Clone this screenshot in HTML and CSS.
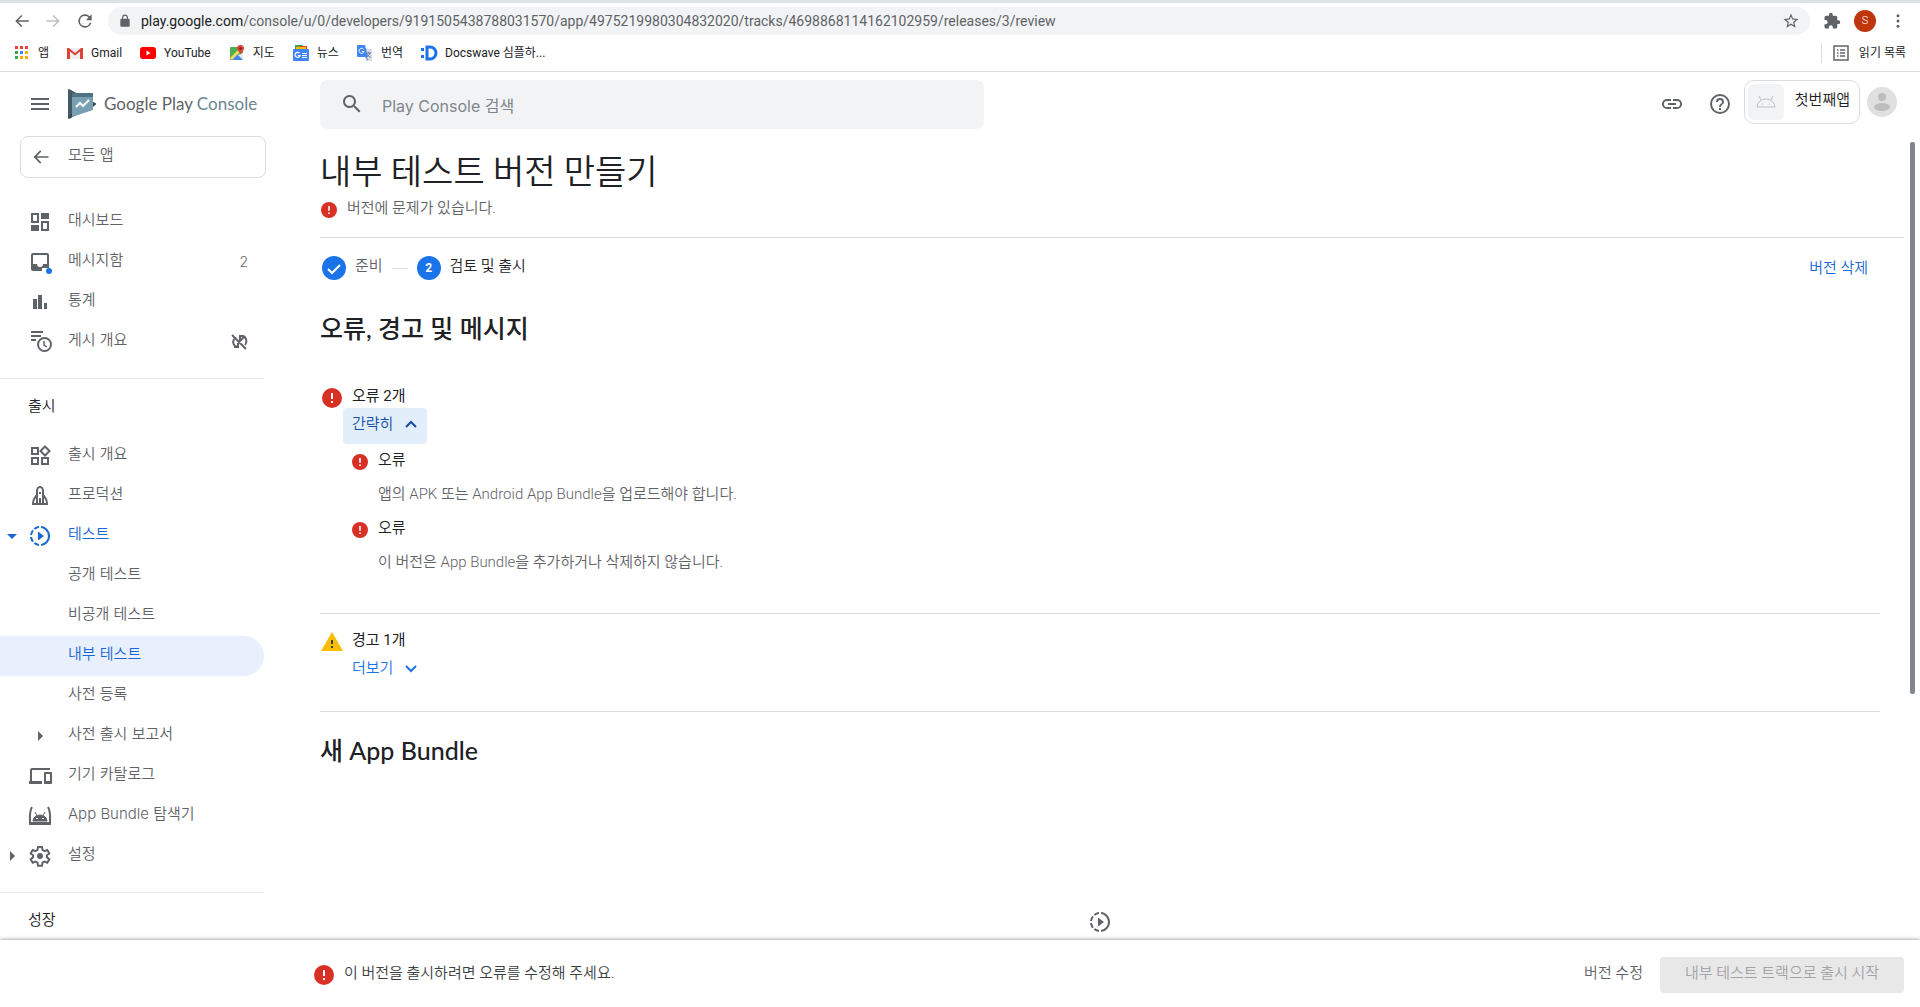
FILE: index.html
```html
<!DOCTYPE html>
<html lang="ko">

<head>
    <meta charset="UTF-8">
    <meta name="viewport" content="width=device-width, initial-scale=1.0">
    <title>내부 테스트 버전 만들기 | Google Play Console</title>
    <link rel="stylesheet" href="styles.css">
</head>

<body>
    <!-- 공용 아이콘 -->
    <svg class="sprite" aria-hidden="true">
        <symbol id="i-error" viewBox="0 0 20 20">
            <circle cx="10" cy="10" r="10" fill="#d93025" />
            <path d="M9 5h2v6H9zM9 13h2v2H9z" fill="#fff" />
        </symbol>
        <symbol id="i-test" viewBox="0 0 24 24">
            <path d="M13.05 9.79L10 7.5v9l3.05-2.29L16 12zM11 4.07V2.05c-2.01.2-3.84 1-5.32 2.21L7.1 5.69A7.94 7.94 0 0 1 11 4.07zM5.69 7.1L4.26 5.68A9.95 9.95 0 0 0 2.05 11h2.02c.18-1.46.76-2.79 1.62-3.9zM4.07 13H2.05c.2 2.01 1 3.84 2.21 5.32l1.43-1.43A7.87 7.87 0 0 1 4.07 13zm1.61 6.74A9.98 9.98 0 0 0 11 21.95v-2.02a7.94 7.94 0 0 1-3.9-1.62zM22 12c0 5.16-3.92 9.42-8.95 9.95v-2.02a8 8 0 0 0 0-15.86V2.05C18.08 2.58 22 6.84 22 12z" />
        </symbol>
        <symbol id="i-back" viewBox="0 0 24 24">
            <path d="M21 11H6.83l5.59-5.59L11 4l-8 8 8 8 1.41-1.41L6.83 13H21z" />
        </symbol>
    </svg>

    <header class="browser">
        <div class="toolbar">
            <button class="tool" aria-label="뒤로"><svg width="18" height="18" viewBox="0 0 24 24"><use href="#i-back" /></svg></button>
            <button class="tool forward" aria-label="앞으로"><svg width="18" height="18" viewBox="0 0 24 24"><path d="M3 11h14.17l-5.59-5.59L13 4l8 8-8 8-1.41-1.41L17.17 13H3z" /></svg></button>
            <button class="tool" aria-label="새로고침"><svg width="20" height="20" viewBox="0 0 24 24"><path d="M17.65 6.35A8 8 0 1 0 19.73 14h-2.08A6 6 0 1 1 12 6c1.66 0 3.14.69 4.22 1.78L13 11h7V4z" /></svg></button>
            <div class="omnibox">
                <svg width="14" height="14" viewBox="0 0 24 24"><path d="M18 8h-1V6A5 5 0 0 0 7 6v2H6a2 2 0 0 0-2 2v10c0 1.100.9 2 2 2h12a2 2 0 0 0 2-2V10a2 2 0 0 0-2-2zM9 6a3 3 0 0 1 6 0v2H9z" /></svg>
                <p class="url"><b>play.google.com</b>/console/u/0/developers/9191505438788031570/app/4975219980304832020/tracks/4698868114162102959/releases/3/review</p>
                <svg width="18" height="18" viewBox="0 0 24 24"><path d="M22 9.24l-7.19-.62L12 2 9.190 8.630 2 9.240l5.460 4.730L5.820 21 12 17.270 18.180 21l-1.630-7.030zM12 15.400l-3.760 2.270 1-4.280-3.320-2.880 4.380-.38L12 6.100l1.710 4.040 4.380.38-3.320 2.880 1 4.280z" /></svg>
            </div>
            <button class="tool" aria-label="확장 프로그램"><svg width="18" height="18" viewBox="0 0 24 24"><path d="M20.500 11H19V7a2 2 0 0 0-2-2h-4V3.500a2.500 2.500 0 0 0-5 0V5H4a2 2 0 0 0-2 2v3.800h1.500a2.700 2.700 0 0 1 0 5.400H2V20a2 2 0 0 0 2 2h3.800v-1.500a2.700 2.700 0 0 1 5.400 0V22H17a2 2 0 0 0 2-2v-4h1.500a2.500 2.500 0 0 0 0-5z" /></svg></button>
            <button class="profile" aria-label="프로필">S</button>
            <button class="tool" aria-label="메뉴"><svg width="18" height="18" viewBox="0 0 24 24"><circle cx="12" cy="5" r="2" /><circle cx="12" cy="12" r="2" /><circle cx="12" cy="19" r="2" /></svg></button>
        </div>
        <nav class="bookmarks">
            <a href="#"><svg width="16" height="16" viewBox="0 0 16 16"><path d="M1 1h3v3H1zM6 1h3v3H6zM11 1h3v3h-3z" fill="#ea4335" /><path d="M1 6h3v3H1z" fill="#34a853" /><path d="M6 6h3v3H6z" fill="#4285f4" /><path d="M11 6h3v3h-3zM6 11h3v3H6zM11 11h3v3h-3z" fill="#fbab05" /><path d="M1 11h3v3H1z" fill="#34a853" /></svg>앱</a>
            <a href="#"><svg width="16" height="16" viewBox="0 0 16 16"><path d="M1 3h14v11H1z" fill="#eee" /><path d="M0 3v11h3V6.500l5 4 5-4V14h3V3h-2L8 8 2 3z" fill="#db4437" /></svg>Gmail</a>
            <a href="#"><svg width="16" height="16" viewBox="0 0 16 16"><rect y="2" width="16" height="12" rx="3" fill="#f00" /><path d="M6.500 5.500v5l4-2.500z" fill="#fff" /></svg>YouTube</a>
            <a href="#"><svg width="16" height="16" viewBox="0 0 16 16"><rect x="1" y="2" width="13" height="13" rx="1" fill="#4caf50" /><path d="M2 15l6-6 6 6z" fill="#4285f4" /><path d="M1 13L12 2l2 2L3 15z" fill="#fdd663" /><path d="M9 10l5 5V8z" fill="#e8eaed" /><path d="M11.500 0a3.500 3.500 0 0 0-3.500 3.600c0 2.400 3 3.400 3.500 6.400.5-3 3.500-4 3.500-6.400A3.500 3.500 0 0 0 11.500 0z" fill="#db4437" /><circle cx="11.500" cy="3.500" r="1.200" fill="#7b1f17" /></svg>지도</a>
            <a href="#"><svg width="16" height="16" viewBox="0 0 16 16"><path d="M2 0h8v5H2z" fill="#34a853" /><path d="M6 1h8v5H6z" fill="#ea4335" /><path d="M3 2h10v4H3z" fill="#fbbc04" /><rect y="4" width="16" height="12" rx="1" fill="#4285f4" /><path d="M6.500 8.200A2.500 2.500 0 1 0 7 10.500H4.800M9 8.500h5M9 10.500h5M9 12.500h5" fill="none" stroke="#fff" stroke-width="1.200" /></svg>뉴스</a>
            <a href="#"><svg width="16" height="16" viewBox="0 0 16 16"><path d="M6 4h9v12H9z" fill="#dadce0" /><path d="M1 0h7l3 12H1a1 1 0 0 1-1-1V1a1 1 0 0 1 1-1z" fill="#4285f4" /><path d="M6.500 4.200A2.500 2.500 0 1 0 7 6.500H4.800" fill="none" stroke="#fff" /><path d="M9 8h5M11.500 7v1M13 8c-.5 2-2 3-3 4M10 9.500l3.500 3M9 12l2 3" fill="none" stroke="#5c7bb5" /></svg>번역</a>
            <a href="#"><svg width="16" height="16" viewBox="0 0 16 16"><path d="M0 3h3v3H0zM0 10h3v3H0z" fill="#1a73e8" /><path d="M6 2h3a6 6 0 0 1 0 12H6z" fill="none" stroke="#1a73e8" stroke-width="3" /></svg>Docswave 심플하...</a>
            <a class="reading" href="#"><svg width="16" height="16" viewBox="0 0 16 16"><path d="M1 1h14v14H1zM4 5h1.500M7 5h5M4 8h1.500M7 8h5M4 11h1.500M7 11h5" fill="none" stroke="#5f6368" stroke-width="1.500" /></svg>읽기 목록</a>
        </nav>
    </header>

    <header class="app-bar">
        <div class="brand">
            <button class="tool" aria-label="메뉴 열기"><svg width="24" height="24" viewBox="0 0 24 24"><path d="M3 18h18v-2H3zm0-5h18v-2H3zm0-7v2h18V6z" /></svg></button>
            <a class="logo" href="#">
                <svg width="28" height="30" viewBox="0 0 28 30"><path d="M0 1a1 1 0 0 1 1-1l26 14a1 1 0 0 1 0 2L1 30a1 1 0 0 1-1-1z" fill="#455a64" /><path d="M4 4h21v17L4 28z" fill="#78a0b2" /><path d="M4 4h21v4H4z" fill="#4f7485" /><path d="M25 13v5l3-3z" fill="#37474f" /><path d="M8 18l4-4 3 3 6-6" fill="none" stroke="#fff" stroke-width="2" /><path d="M0 29l4-5v4z" fill="#37474f" /></svg>
                <span>Google Play <em>Console</em></span>
            </a>
        </div>
        <label class="search">
            <svg width="24" height="24" viewBox="0 0 24 24"><path d="M15.500 14h-.79l-.28-.27A6.500 6.500 0 1 0 13.730 14.430l.27.28v.79l5 4.990L20.490 19zM9.500 14a4.500 4.500 0 1 1 0-9 4.500 4.500 0 0 1 0 9z" /></svg>
            <input type="text" placeholder="Play Console 검색" aria-label="Play Console 검색">
        </label>
        <div class="actions">
            <button class="tool" aria-label="링크 복사"><svg width="24" height="24" viewBox="0 0 24 24"><path d="M3.900 12A3.100 3.100 0 0 1 7 8.900h4V7H7a5 5 0 0 0 0 10h4v-1.900H7A3.100 3.100 0 0 1 3.900 12zM8 13h8v-2H8zm9-6h-4v1.900h4a3.100 3.100 0 0 1 0 6.200h-4V17h4a5 5 0 0 0 0-10z" /></svg></button>
            <button class="tool" aria-label="도움말"><svg width="24" height="24" viewBox="0 0 24 24"><path d="M11 18h2v-2h-2zm1-16a10 10 0 1 0 0 20 10 10 0 0 0 0-20zm0 18a8 8 0 1 1 0-16 8 8 0 0 1 0 16zm0-14a4 4 0 0 0-4 4h2a2 2 0 1 1 4 0c0 2-3 1.750-3 5h2c0-2.250 3-2.500 3-5a4 4 0 0 0-4-4z" /></svg></button>
            <button class="app-chip">
                <span class="app-icon"><svg class="line" width="22" height="22" viewBox="0 0 22 22"><path d="M2 16a9 8 0 0 1 18 0zM6 9L4 5M16 9l2-4M7 13h1M14 13h1" /></svg></span>
                <span class="lift">첫번째앱</span>
            </button>
            <button class="avatar" aria-label="계정"><svg width="30" height="30" viewBox="0 0 30 30"><circle cx="15" cy="15" r="15" fill="#e0e0e0" /><circle cx="15" cy="10" r="4" fill="#bdbdbd" /><ellipse cx="15" cy="20" rx="8" ry="4" fill="#bdbdbd" /></svg></button>
        </div>
    </header>

    <div class="workspace">
        <aside class="sidebar">
            <a class="all-apps" href="#"><svg width="20" height="20" viewBox="0 0 24 24"><use href="#i-back" /></svg><span class="lift">모든 앱</span></a>
            <nav class="nav">
                <a href="#"><i></i><svg width="24" height="24" viewBox="0 0 24 24"><path d="M9 5v6H5V5zm2-2H3v10h8zm10 0h-8v6h8zM11 15H3v6h8zm8-2v6h-4v-6zm2-2h-8v10h8z" /></svg><span class="lift">대시보드</span></a>
                <a href="#"><i></i><svg width="24" height="24" viewBox="0 0 24 24"><path d="M19 3H5a2 2 0 0 0-2 2v14c0 1.100.9 2 2 2h9v-3h7V5a2 2 0 0 0-2-2zm0 11h-4a3 3 0 0 1-6 0H5V5h14z" /><circle cx="21" cy="21" r="3" fill="#1a73e8" /></svg><span class="lift">메시지함</span><span class="count">2</span></a>
                <a href="#"><i></i><svg width="24" height="24" viewBox="0 0 24 24"><path d="M5 9h4v10H5zM10 5h4v14h-4zM16 13h3v6h-3z" /></svg><span class="lift">통계</span></a>
                <a href="#"><i></i><svg width="24" height="24" viewBox="0 0 24 24"><path d="M3 1h12v2H3zM3 5h10v2H3zM3 9h5v2H3z" /><circle cx="16.500" cy="14.500" r="6.500" fill="none" stroke="#5f6368" stroke-width="2" /><path d="M16 11v4l3 2" fill="none" stroke="#5f6368" stroke-width="1.500" /></svg><span class="lift">게시 개요</span><svg class="off line" width="18" height="18" viewBox="0 0 18 18"><path d="M2 2l14 14M5 4v2M4 6c-2 4 0 7 3 8M4 14h4v-4M9 3h5M14 3c3 3 3 7 1 9M10 4v4l4-4" /></svg></a>
            </nav>
            <h2 class="nav-title"><span class="lift">출시</span></h2>
            <nav class="nav">
                <a href="#"><i></i><svg class="line" width="24" height="24" viewBox="0 0 24 24"><path d="M4 4h6v6H4zM4 14h6v6H4zM14 14h6v6h-6zM17 2.500L21.500 7 17 11.500 12.500 7z" /></svg><span class="lift">출시 개요</span></a>
                <a href="#"><i></i><svg class="line" width="24" height="24" viewBox="0 0 24 24"><path d="M9 20V7c0-3 2-4 3-4s3 1 3 4v13M9 11c-2 2-4 5-4 9h14c0-4-2-7-4-9M12 14v6M12 8v2" /></svg><span class="lift">프로덕션</span></a>
                <a class="active" href="#"><i class="caret down"></i><svg width="24" height="24"><use href="#i-test" /></svg><span class="lift">테스트</span></a>
                <a class="sub" href="#"><span class="lift">공개 테스트</span></a>
                <a class="sub" href="#"><span class="lift">비공개 테스트</span></a>
                <a class="sub selected" href="#"><span class="lift">내부 테스트</span></a>
                <a class="sub" href="#"><span class="lift">사전 등록</span></a>
                <a class="nested" href="#"><i class="caret"></i><span class="lift">사전 출시 보고서</span></a>
                <a href="#"><i></i><svg width="24" height="24" viewBox="0 0 24 24"><path d="M4 6h18V4H4a2 2 0 0 0-2 2v11H1v3h13v-3H4zm19 2h-6a1 1 0 0 0-1 1v10c0 .55.450 1 1 1h6c.55 0 1-.450 1-1V9a1 1 0 0 0-1-1zm-1 9h-4v-7h4z" /></svg><span class="lift">기기 카탈로그</span></a>
                <a href="#"><i></i><svg width="24" height="24" viewBox="0 0 24 24"><path d="M4 3C1 8 2 15 2 20h20c0-5 1-12-2-17" fill="none" stroke="#5f6368" stroke-width="2" /><path d="M5 17a7 6 0 0 1 14 0zM7 8l2 4M17 8l-2 4" stroke="#5f6368" /><path d="M2 18h20v3H2z" /><path d="M8 14h2v1H8zM14 14h2v1h-2z" fill="#fff" /></svg><span class="lift">App Bundle 탐색기</span></a>
                <a href="#"><i class="caret"></i><svg class="line" width="24" height="24" viewBox="0 0 24 24"><path d="M10 3h4l.5 3 2 1.200 2.800-1.200 2 3.500-2.300 1.700v2.200l2.300 1.800-2 3.500-2.800-1.200-2 1.200-.5 3h-4l-.5-3-2-1.200-2.800 1.200-2-3.500L5 13.400v-2.200L2.700 9.500l2-3.500 2.800 1.200 2-1.200z" /><circle cx="12" cy="12" r="3" fill="#5f6368" stroke="none" /></svg><span class="lift">설정</span></a>
            </nav>
            <h2 class="nav-title"><span class="lift">성장</span></h2>
        </aside>

        <main class="content">
            <div class="page-head">
                <h1>내부 테스트 버전 만들기</h1>
                <p class="problem"><svg width="16" height="16"><use href="#i-error" /></svg><span class="lift">버전에 문제가 있습니다.</span></p>
            </div>
            <div class="inner">
                <div class="steps">
                    <svg width="24" height="24" viewBox="0 0 24 24"><circle cx="12" cy="12" r="12" fill="#1a73e8" /><path d="M6 13l4 4 8-8" fill="none" stroke="#fff" stroke-width="2" /></svg>
                    <span class="lift">준비</span>
                    <span class="dash"></span>
                    <b class="number">2</b>
                    <span class="lift current">검토 및 출시</span>
                    <button class="text-button delete">버전 삭제</button>
                </div>
                <h2>오류, 경고 및 메시지</h2>
                <section class="group errors">
                    <svg width="20" height="20"><use href="#i-error" /></svg>
                    <div>
                        <h3>오류 2개</h3>
                        <button class="toggle open">간략히<svg width="14" height="14" viewBox="0 0 14 14"><path d="M2 10l5-5 5 5" /></svg></button>
                        <ul class="issues">
                            <li>
                                <h4><svg width="16" height="16"><use href="#i-error" /></svg><span class="lift">오류</span></h4>
                                <p>앱의 APK 또는 Android App Bundle을 업로드해야 합니다.</p>
                            </li>
                            <li>
                                <h4><svg width="16" height="16"><use href="#i-error" /></svg><span class="lift">오류</span></h4>
                                <p>이 버전은 App Bundle을 추가하거나 삭제하지 않습니다.</p>
                            </li>
                        </ul>
                    </div>
                </section>
                <section class="group">
                    <svg width="22" height="20" viewBox="0 0 22 20"><path d="M11 0l11 19H0z" fill="#fbbc04" /><path d="M10 8h2v4h-2zM10 14h2v2h-2z" fill="#3c4043" /></svg>
                    <div>
                        <h3>경고 1개</h3>
                        <button class="toggle">더보기<svg width="14" height="14" viewBox="0 0 14 14"><path d="M2 5l5 5 5-5" /></svg></button>
                    </div>
                </section>
                <h2>새 App Bundle</h2>
                <div class="loading"><svg width="24" height="24"><use href="#i-test" /></svg></div>
            </div>
            <div class="scrollbar"></div>
        </main>
    </div>

    <footer class="action-bar">
        <p><svg width="20" height="20"><use href="#i-error" /></svg><span class="lift">이 버전을 출시하려면 오류를 수정해 주세요.</span></p>
        <button class="text-button lift">버전 수정</button>
        <button class="release" disabled>내부 테스트 트랙으로 출시 시작</button>
    </footer>
</body>

</html>
```

FILE: styles.css
```css
:root {
    --text: #202124;
    --muted: #5f6368;
    --blue: #1a73e8;
    --line: #dadce0;
    --field: #f1f3f4;
    --selected: #e8f0fe;
}

* {
    box-sizing: border-box;
}

body {
    height: 100vh;
    margin: 0;
    display: flex;
    flex-direction: column;
    overflow: hidden;
    background: #fff;
    color: var(--text);
    font-family: "Roboto", "Noto Sans CJK KR", sans-serif;
    font-size: 15px;
    font-weight: 350;
    line-height: 20px;
}

h1,
h2,
h3,
h4,
p,
ul {
    margin: 0;
    padding: 0;
    font-weight: 350;
}

a {
    color: inherit;
    text-decoration: none;
}

button {
    padding: 0;
    border: none;
    background: none;
    color: inherit;
    font: inherit;
    cursor: pointer;
}

svg {
    flex: none;
    display: block;
    fill: var(--muted);
    overflow: visible;
}

.line {
    fill: none;
    stroke: var(--muted);
    stroke-width: 2;
}

.sprite {
    position: absolute;
    width: 0;
    height: 0;
}

/* 한글 글자는 아이콘보다 조금 위에 놓인다 */
.lift {
    padding-bottom: 4px;
}

.tool {
    display: flex;
    align-items: center;
    justify-content: center;
}

/* 브라우저 영역 */
.browser {
    flex: none;
    border-top: 3px solid #dee1e6;
    border-bottom: 1px solid var(--line);
    font-family: "Roboto", "Noto Sans CJK KR", sans-serif;
}

.toolbar {
    display: flex;
    align-items: center;
    gap: 13px;
    padding: 4px 13px 0 13px;
}

.forward {
    opacity: 0.4;
}

.omnibox {
    flex: 1;
    display: flex;
    align-items: center;
    gap: 9px;
    height: 28px;
    padding: 0 10px;
    border-radius: 14px;
    background: var(--field);
}

.url {
    flex: 1;
    color: var(--muted);
    font-size: 14px;
    font-weight: 400;
}

.url b {
    color: var(--text);
    font-weight: 400;
}

.profile {
    width: 22px;
    height: 22px;
    border-radius: 50%;
    background: #bf360c;
    color: #fff;
    font-size: 11px;
    line-height: 22px;
}

.bookmarks {
    display: flex;
    align-items: center;
    gap: 18px;
    height: 36px;
    padding: 0 14px;
    font-size: 12px;
    font-weight: 400;
}

.bookmarks a {
    display: flex;
    align-items: center;
    gap: 8px;
}

.bookmarks .reading {
    gap: 10px;
    margin-left: auto;
    padding-left: 11px;
    border-left: 1px solid var(--line);
}

/* 상단 바 */
.app-bar {
    flex: none;
    display: flex;
    align-items: center;
    height: 64px;
    padding-right: 23px;
}

.brand {
    display: flex;
    align-items: center;
    gap: 16px;
    width: 320px;
    padding-left: 28px;
}

.logo {
    display: flex;
    align-items: center;
    gap: 8px;
    color: var(--muted);
    font-family: "Lato", sans-serif;
    font-size: 17px;
    font-weight: 400;
}

.logo em {
    color: #6b8591;
    font-style: normal;
}

.search {
    flex: 0 1 664px;
    display: flex;
    align-items: center;
    gap: 18px;
    height: 49px;
    padding: 0 20px;
    border-radius: 8px;
    background: var(--field);
}

.search input {
    flex: 1;
    padding: 4px 0 0;
    border: none;
    outline: none;
    background: none;
    font-family: "Inter", "Noto Sans CJK KR", sans-serif;
    font-size: 16px;
}

.search input::placeholder {
    color: #80868b;
}

.actions {
    display: flex;
    align-items: center;
    gap: 24px;
    margin-left: auto;
}

.app-chip {
    display: flex;
    align-items: center;
    gap: 11px;
    height: 44px;
    margin: 0 -17px 4px -12px;
    padding: 0 9px 0 3px;
    border: 1px solid var(--line);
    border-radius: 10px;
}

.app-icon {
    display: grid;
    place-items: center;
    width: 36px;
    height: 36px;
    border-radius: 6px;
    background: var(--field);
}

.app-icon .line {
    stroke: #bdc1c6;
    stroke-width: 1;
}

.avatar {
    margin-bottom: 4px;
}

.workspace {
    flex: 1;
    display: flex;
    min-height: 0;
}

/* 사이드바 */
.sidebar {
    flex: none;
    width: 320px;
    overflow: hidden;
    color: var(--muted);
    font-family: "Inter", "Noto Sans CJK KR", sans-serif;
}

.all-apps {
    display: flex;
    align-items: center;
    gap: 17px;
    width: 246px;
    height: 42px;
    margin: 0 0 24px 20px;
    padding-left: 10px;
    border: 1px solid var(--line);
    border-radius: 8px;
}

.nav {
    width: 264px;
    padding-bottom: 16px;
    border-bottom: 1px solid #e8eaed;
}

.nav a {
    display: flex;
    align-items: center;
    gap: 16px;
    height: 40px;
    padding: 0 12px;
}

.nav i {
    flex: none;
    width: 0;
    height: 0;
}

.nav .caret {
    margin-left: -2px;
    margin-right: -3px;
    border: 5px solid transparent;
    border-left-color: currentColor;
    border-right-width: 0;
}

.nav .caret.down {
    margin-left: -5px;
    margin-right: -5px;
    border: 5px solid transparent;
    border-top-color: currentColor;
    border-bottom-width: 0;
}

.nav a.sub {
    padding-left: 68px;
}

.nav a.nested {
    gap: 28px;
    padding-left: 40px;
}

.nav a.active,
.nav a.selected {
    color: #1967d2;
}

.nav a.active svg {
    fill: #1967d2;
}

.nav a.selected {
    border-radius: 0 20px 20px 0;
    background: var(--selected);
}

.count,
.nav .off {
    margin-left: auto;
    margin-right: 4px;
}

.count {
    font-size: 14px;
}

.nav-title {
    padding: 17px 28px 16px;
    color: var(--text);
    font-size: 15px;
}

.nav-title span {
    display: block;
}

/* 본문 */
.content {
    flex: 1;
    display: grid;
    grid-template-columns: 1fr 5px;
    grid-template-rows: auto 1fr;
    column-gap: 6px;
    padding-right: 5px;
    overflow: hidden;
}

.page-head {
    padding: 10px 0 15px;
    border-bottom: 1px solid var(--line);
}

h1 {
    font-size: 34px;
    line-height: 52px;
}

.problem {
    display: flex;
    align-items: center;
    gap: 10px;
    padding-left: 1px;
    color: var(--muted);
}

.scrollbar {
    grid-column: 2;
    grid-row: 1 / 3;
    height: 552px;
    margin-top: 6px;
    border-radius: 2px;
    background: #80868b;
}

.inner {
    grid-row: 2;
    padding-right: 24px;
}

.inner h2 {
    font-size: 25px;
    line-height: 32px;
    font-weight: 500;
    font-family: "Lato", "Noto Sans CJK KR", sans-serif;
}

.steps {
    display: flex;
    align-items: center;
    gap: 9px;
    padding: 18px 12px 32px 2px;
    color: var(--muted);
}

.dash {
    width: 16px;
    border-top: 1px solid var(--line);
}

.number {
    width: 24px;
    height: 24px;
    border-radius: 50%;
    background: var(--blue);
    color: #fff;
    font-size: 12px;
    font-weight: 700;
    line-height: 24px;
    text-align: center;
}

.current {
    color: var(--text);
}

.text-button {
    color: var(--muted);
}

.delete {
    margin-left: auto;
    color: #1967d2;
}

.group {
    display: flex;
    gap: 9px;
    padding: 18px 0 23px 2px;
    border-bottom: 1px solid var(--line);
}

.group > svg {
    width: 22px;
    margin-left: -1px;
}

.group h3 {
    font-size: 15px;
    font-weight: 400;
    line-height: 16px;
}

.errors {
    margin-top: 26px;
    padding-bottom: 33px;
}

.toggle {
    display: flex;
    align-items: center;
    gap: 11px;
    height: 36px;
    margin: 4px 0 0 -9px;
    padding: 0 9px 4px;
    border-radius: 4px;
    color: var(--blue);
}

.toggle svg {
    fill: none;
    stroke: currentColor;
    stroke-width: 2;
}

.toggle.open {
    background: #e3eefb;
    color: #174ea6;
}

.issues {
    list-style: none;
}

.issues li {
    padding-top: 8px;
}

.issues h4 {
    display: flex;
    align-items: center;
    gap: 10px;
    height: 20px;
    font-size: 15px;
}

.issues p {
    padding: 12px 0 8px 26px;
    color: var(--muted);
}

.group + h2 {
    margin-top: 22px;
}

.loading {
    display: flex;
    justify-content: center;
    padding-top: 144px;
}

/* 하단 바 */
.action-bar {
    flex: none;
    display: flex;
    align-items: center;
    gap: 17px;
    height: 67px;
    padding: 3px 16px 0 314px;
    background: #fff;
    box-shadow: 0 0 4px rgba(0, 0, 0, 0.5);
}

.action-bar p {
    display: flex;
    align-items: center;
    gap: 10px;
    margin-right: auto;
    color: #3c4043;
}

.release {
    height: 36px;
    padding: 0 25px 4px;
    border-radius: 4px;
    background: #e8e8e8;
    color: #a2a4a6;
    cursor: default;
}
```
